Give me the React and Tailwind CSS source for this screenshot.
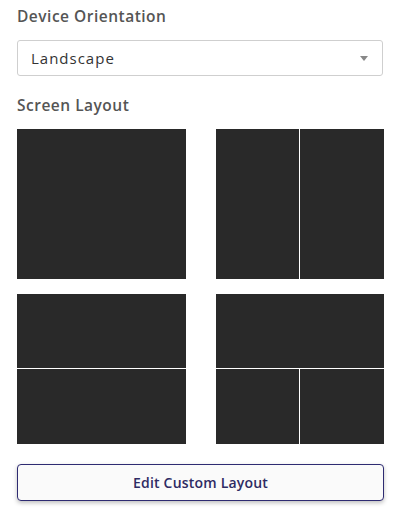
function Tile({ children }) {
    return <div className="h-[150px] bg-[#292929] flex flex-col gap-px">{children}</div>;
}

export default function App() {
    return (
        <div className="w-[398px] h-[515px] bg-white px-[17px] pt-[6px] font-['Open_Sans',sans-serif]">
            {/* Orientation */}
            <h2 className="text-[15.5px] font-semibold text-[#555] leading-[20px] tracking-[0.5px]">Device Orientation</h2>
            <div className="mt-[14px] h-[36px] w-[366px] border border-[#cfcfcf] rounded-[3px] flex items-center justify-between pl-[13px] pr-[14px]">
                <span className="text-[15px] text-[#333] tracking-[1px]">Landscape</span>
                <span className="w-0 h-0 border-l-[4px] border-r-[4px] border-t-[5px] border-l-transparent border-r-transparent border-t-[#888]" />
            </div>

            {/* Layouts */}
            <h2 className="mt-[19px] text-[15.5px] font-semibold text-[#555] leading-[20px] tracking-[0.5px]">Screen Layout</h2>
            <div className="mt-[14px] grid grid-cols-[169px_168px] gap-x-[30px] gap-y-[15px]">
                <Tile />
                <div className="h-[150px] flex gap-px bg-white">
                    <div className="w-[83px] bg-[#292929]" />
                    <div className="flex-1 bg-[#292929]" />
                </div>
                <div className="h-[150px] flex flex-col gap-px">
                    <div className="h-[74px] bg-[#292929]" />
                    <div className="flex-1 bg-[#292929]" />
                </div>
                <div className="h-[150px] flex flex-col gap-px">
                    <div className="h-[74px] bg-[#292929]" />
                    <div className="flex-1 flex gap-px">
                        <div className="w-[83px] bg-[#292929]" />
                        <div className="flex-1 bg-[#292929]" />
                    </div>
                </div>
            </div>

            <button className="mt-[20px] w-[367px] h-[37px] rounded-[4px] border border-[#2e2b72] bg-[#fafafa] shadow-[0_2px_4px_rgba(0,0,0,0.25)] text-[14px] font-semibold text-[#2e2b63] tracking-[0.2px] flex items-center justify-center">
                Edit Custom Layout
            </button>
        </div>
    );
}
